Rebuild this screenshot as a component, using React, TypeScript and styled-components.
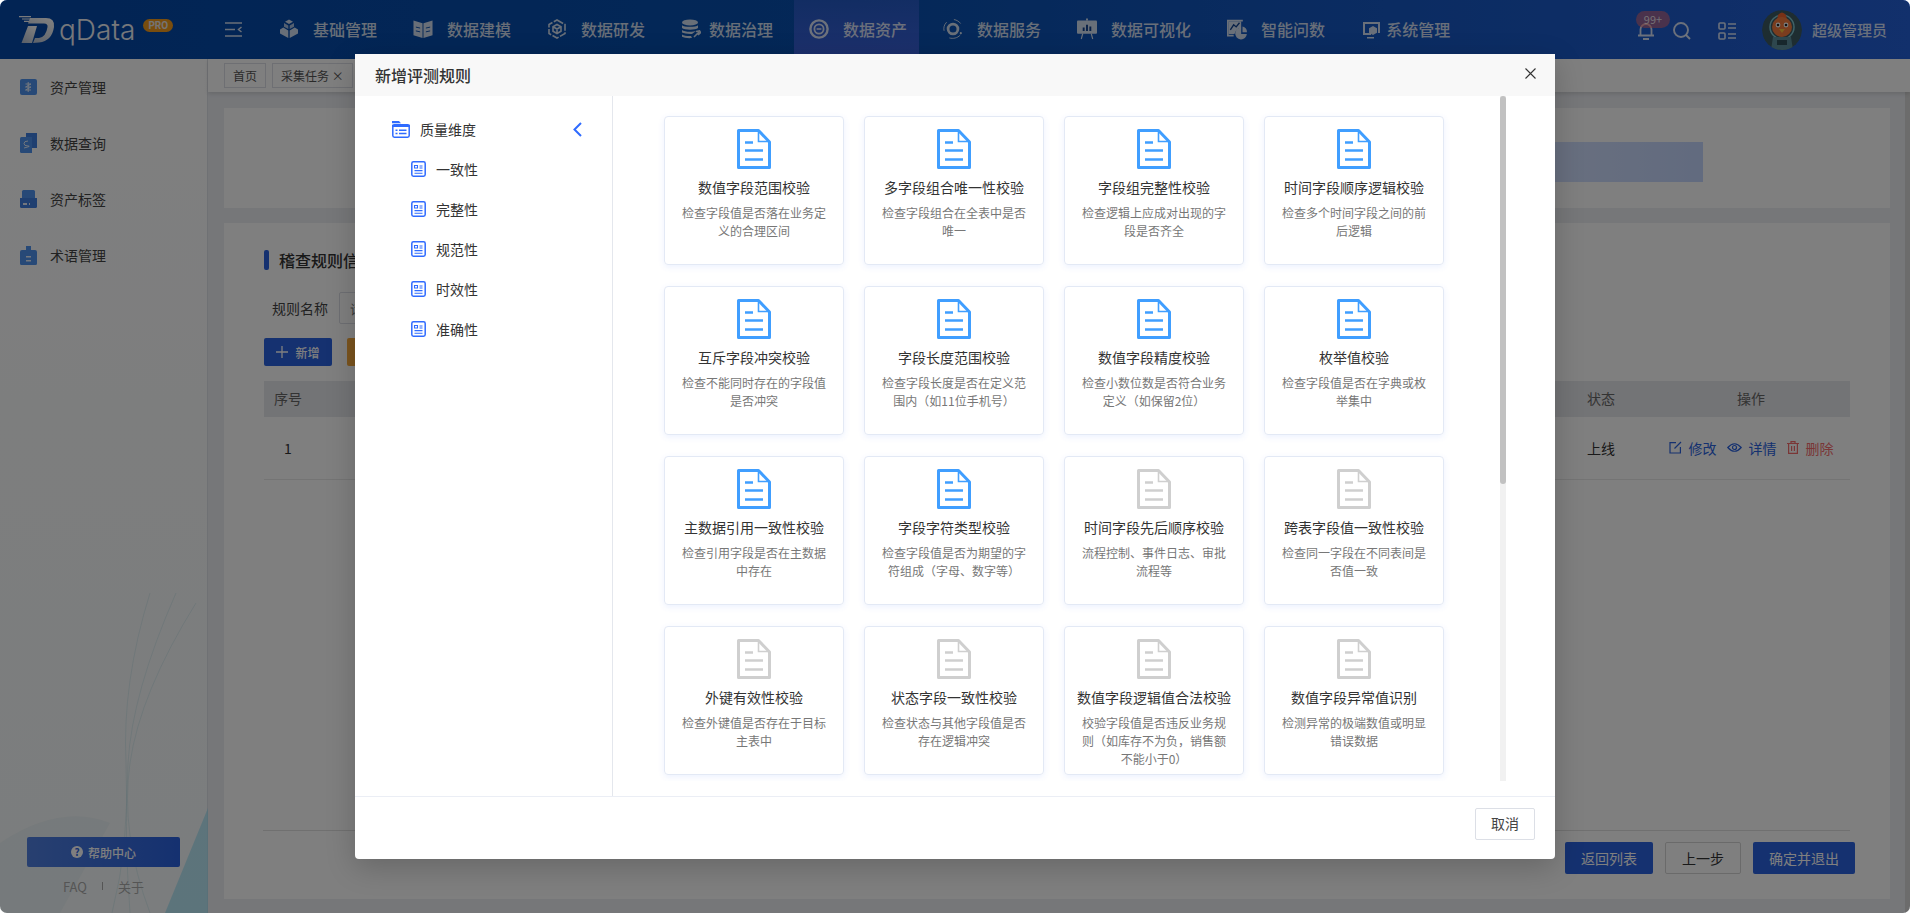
import React from 'react';
import styled, { createGlobalStyle } from 'styled-components';

const GlobalStyle = createGlobalStyle`
	html, body {
		margin: 0;
		height: 100%;
		background: #fff;
		overflow: hidden;
	}
	* {
		box-sizing: border-box;
	}
	body {
		font-family: 'Noto Sans CJK SC', 'Noto Sans', Roboto, sans-serif;
		color: #333;
	}
`;

const navItems = [
	{ label: '基础管理', icon: 'cube' },
	{ label: '数据建模', icon: 'book' },
	{ label: '数据研发', icon: 'hex' },
	{ label: '数据治理', icon: 'db', gap: 8 },
	{ label: '数据资产', icon: 'target', active: true },
	{ label: '数据服务', icon: 'orbit' },
	{ label: '数据可视化', icon: 'board' },
	{ label: '智能问数', icon: 'chart' },
	{ label: '系统管理', icon: 'screen', gap: 5 },
];

const sideItems = ['资产管理', '数据查询', '资产标签', '术语管理'];
const dimensions = ['一致性', '完整性', '规范性', '时效性', '准确性'];

const rules = [
	{ title: '数值字段范围校验', desc: '检查字段值是否落在业务定义的合理区间', on: true },
	{ title: '多字段组合唯一性校验', desc: '检查字段组合在全表中是否唯一', on: true },
	{ title: '字段组完整性校验', desc: '检查逻辑上应成对出现的字段是否齐全', on: true },
	{ title: '时间字段顺序逻辑校验', desc: '检查多个时间字段之间的前后逻辑', on: true },
	{ title: '互斥字段冲突校验', desc: '检查不能同时存在的字段值是否冲突', on: true },
	{ title: '字段长度范围校验', desc: '检查字段长度是否在定义范围内（如11位手机号）', on: true },
	{ title: '数值字段精度校验', desc: '检查小数位数是否符合业务定义（如保留2位）', on: true },
	{ title: '枚举值校验', desc: '检查字段值是否在字典或枚举集中', on: true },
	{ title: '主数据引用一致性校验', desc: '检查引用字段是否在主数据中存在', on: true },
	{ title: '字段字符类型校验', desc: '检查字段值是否为期望的字符组成（字母、数字等）', on: true },
	{ title: '时间字段先后顺序校验', desc: '流程控制、事件日志、审批流程等', on: false },
	{ title: '跨表字段值一致性校验', desc: '检查同一字段在不同表间是否值一致', on: false },
	{ title: '外键有效性校验', desc: '检查外键值是否存在于目标主表中', on: false },
	{ title: '状态字段一致性校验', desc: '检查状态与其他字段值是否存在逻辑冲突', on: false },
	{ title: '数值字段逻辑值合法校验', desc: '校验字段值是否违反业务规则（如库存不为负，销售额不能小于0）', on: false },
	{ title: '数值字段异常值识别', desc: '检测异常的极端数值或明显错误数据', on: false },
];

function NavGlyph({ name }: { name: string }) {
	const c = 'currentColor';
	switch (name) {
		case 'cube':
			return (
				<svg width='20' height='20' viewBox='0 0 20 20' fill={c}>
					<path d='M10 0.5 14 2.8 10 5 6 2.8Z' />
					<path d='M5 4 9.3 6.4V10L5 7.7ZM15 4 10.7 6.4V10L15 7.7Z' opacity='.8' />
					<path d='M4.3 8.6 9.3 11.4V19L1 14.6V10.4ZM15.7 8.6 10.7 11.4V19L19 14.6V10.4Z' />
				</svg>
			);
		case 'book':
			return (
				<svg width='21' height='20' viewBox='0 0 21 20' fill={c}>
					<path d='M0.5 1 10 4V19.5L0.5 16.5ZM20.5 1 11 4V19.5L20.5 16.5Z' />
					<path d='M3 8 7.5 9M3 12 7.5 13M18 8 13.5 9M18 12 13.5 13' stroke='#0a4fb0' strokeWidth='1' />
				</svg>
			);
		case 'hex':
			return (
				<svg width='20' height='20' viewBox='0 0 20 20' fill='none' stroke={c} strokeWidth='1.6'>
					<path d='M10 1 18 5.5V14.5L10 19 2 14.5V5.5Z' strokeDasharray='7 1.5' />
					<path d='M10 5.5 14 7.8V12.2L10 14.5 6 12.2V7.8ZM6 7.8 10 10 14 7.8M10 10V14.5' />
				</svg>
			);
		case 'db':
			return (
				<svg width='20' height='20' viewBox='0 0 20 20' fill={c}>
					<ellipse cx='9' cy='3.4' rx='8' ry='3' />
					<path d='M1 6.2C3 8.4 15 8.4 17 6.2V9C15 11.2 3 11.2 1 9Z' />
					<path d='M1 11C3 13.2 12 13.2 15 12L11 15C7 15.2 3 14.6 1 13.6Z' />
					<path d='M1 15.4C3 16.8 7 17.2 10 17L11 19C7 19.4 3 18.8 1 17.8Z' />
					<path d='M13 18 18 13M15 12.5 18.5 11.8 19.5 13.5 17 16' stroke={c} strokeWidth='1.6' fill='none' />
				</svg>
			);
		case 'target':
			return (
				<svg width='20' height='20' viewBox='0 0 20 20' fill='none' stroke={c}>
					<circle cx='10' cy='10' r='8.6' strokeWidth='2.4' />
					<circle cx='10' cy='10' r='4.6' strokeWidth='1.8' />
					<path d='M7.6 10H12.4' strokeWidth='1.6' />
				</svg>
			);
		case 'orbit':
			return (
				<svg width='22' height='24' viewBox='0 0 22 24' fill='none' stroke={c}>
					<circle cx='11' cy='12' r='5.4' strokeWidth='3' />
					<path d='M4 4.5C1 7.5 0.5 11 1.2 14M7 21.8C11 23 16 22 19 18.6M12 1.6C15 2 18 4 19.4 6' strokeWidth='1' />
					<circle cx='19.6' cy='16.6' r='1.2' fill={c} stroke='none' />
				</svg>
			);
		case 'board':
			return (
				<svg width='21' height='22' viewBox='0 0 21 22' fill={c}>
					<path d='M9.5 0H11.5V2H9.5Z' />
					<path d='M1 2H20Q21 2 21 3V15Q21 16 20 16H1Q0 16 0 15V3Q0 2 1 2Z' />
					<path d='M6 9.5H8V13H6ZM9.5 6.5H11.5V13H9.5ZM13 8.5H15V13H13Z' fill='#10408f' />
					<path d='M6 16 4.5 21.5M15 16 16.5 21.5' stroke={c} strokeWidth='1.2' fill='none' />
				</svg>
			);
		case 'chart':
			return (
				<svg width='24' height='26' viewBox='0 0 24 26' fill={c}>
					<path d='M0 2H19V4H17.6L2 4V20H8V22H0Z' />
					<path d='M2 4H17V12Q11 11.5 9 19H2Z' />
					<path d='M4 14 8 8 11 10.5 15 5.5' stroke='#10408f' strokeWidth='1.6' fill='none' />
					<path d='M17 11.5A7 7 0 1 0 23.8 19H17Z' />
					<path d='M18.6 10A7 7 0 0 1 24 16.8H18.6Z' />
				</svg>
			);
		default:
			return (
				<svg width='19' height='19' viewBox='0 0 19 19' fill={c}>
					<path d='M1 2H18V13H16V4H3V13H9V15H1Z' />
					<path d='M11 6 15 8.2V12.8L11 15 7 12.8V8.2Z' />
					<path d='M5 17H12V18.5H5Z' />
				</svg>
			);
	}
}

function SideGlyph({ index }: { index: number }) {
	const fill = '#4e92ee';
	const dark = '#3f7fe0';
	if (index === 1) {
		return (
			<svg width='17' height='20' viewBox='0 0 17 20'>
				<path d='M6 0H17V15H6Z' fill={dark} />
				<path d='M1.5 4H12V20H1.5Q0 20 0 18.5V5.5Q0 4 1.5 4Z' fill={fill} />
				<path d='M8 8Q4 8 4 10.5T8 13 4 15' stroke='#e6effc' fill='none' />
			</svg>
		);
	}
	if (index === 2) {
		return (
			<svg width='17' height='18' viewBox='0 0 17 18'>
				<path d='M3.5 0H13.5Q15 0 15 1.5V8H2V1.5Q2 0 3.5 0Z' fill={fill} />
				<path d='M0 8H17V16.5Q17 18 15.5 18H1.5Q0 18 0 16.5Z' fill={dark} />
				<path d='M3 13H7V15H3ZM9 13H10V15H9Z' fill='#e6effc' />
			</svg>
		);
	}
	if (index === 3) {
		return (
			<svg width='17' height='19' viewBox='0 0 17 19'>
				<path d='M6 0H11V4H15Q17 4 17 6V17.5Q17 19 15.5 19H1.5Q0 19 0 17.5V6Q0 4 2 4H6Z' fill={fill} />
				<path d='M6 10H11V11.5H6ZM6 14H11V15.5H6Z' fill='#e6effc' />
			</svg>
		);
	}
	return (
		<svg width='17' height='16' viewBox='0 0 17 16'>
			<rect width='17' height='16' rx='2' fill={fill} />
			<path d='M5.5 5H11M5.5 11H11M11 5 5.5 8H11L5.5 11M8.2 3V13' stroke='#e6effc' fill='none' />
		</svg>
	);
}

function DocIcon({ color }: { color: string }) {
	return (
		<svg width='34' height='40' viewBox='0 0 34 40' fill='none'>
			<path d='M1.5 1.5H21.5L32.5 13V38.5H1.5Z' stroke={color} strokeWidth='3' strokeLinejoin='round' />
			<path d='M21.5 2V12.5H32' stroke={color} strokeWidth='1.6' />
			<path d='M8 13.5H16M8 21.5H26M8 30.5H26' stroke={color} strokeWidth='2.4' />
		</svg>
	);
}

function Dimension() {
	return (
		<svg width='15' height='16' viewBox='0 0 15 16' fill='none' stroke='#2f6bff'>
			<rect x='0.8' y='0.8' width='13.4' height='14.4' rx='1.6' strokeWidth='1.5' />
			<path d='M3.5 4.5H6.5V7H3.5ZM8.5 5H11.5M8.5 7H11.5M3.5 9.6H11.5M3.5 12.2H11.5' strokeWidth='1.1' />
		</svg>
	);
}

function App() {
	return (
		<Page>
			<GlobalStyle />
			<Header>
				<Logo>
					<svg width='36' height='28' viewBox='0 0 36 28'>
						<defs>
							<linearGradient id='logoFill' x1='0.8' y1='0' x2='0.1' y2='1'>
								<stop offset='0' stopColor='#ffffff' />
								<stop offset='1' stopColor='#b4c0d2' />
							</linearGradient>
						</defs>
						<path d='M11 2H27Q36 2 35 11 33 25 20 26.5L14 27 16 22H20Q27 21 28.5 11 29 7.5 25 7.5H9Z' fill='url(#logoFill)' />
						<path d='M9 10H18L13 27H2.5Z' fill='url(#logoFill)' />
						<path d='M0 0.6H12M3 3H13M5 5.4H10' stroke='#f2f4f8' strokeWidth='1.2' />
					</svg>
					<LogoText>qData</LogoText>
					<ProBadge>PRO</ProBadge>
				</Logo>
				<Toggle>
					<svg width='17' height='15' viewBox='0 0 17 15' stroke='currentColor' strokeWidth='1.5' fill='none'>
						<path d='M0 1H17M0 7.5H10M0 14H17M16.5 5 13.5 7.5 16.5 10' />
					</svg>
				</Toggle>
				<Nav>
					{navItems.map((item) => (
						<NavItem key={item.label} $active={item.active} $gap={item.gap}>
							<NavIconBox>
								<NavGlyph name={item.icon} />
							</NavIconBox>
							{item.label}
						</NavItem>
					))}
				</Nav>
				<HeaderRight>
					<Bell>
						<svg width='18' height='18' viewBox='0 0 18 18' fill='none' stroke='currentColor' strokeWidth='1.8'>
							<path d='M3.5 13V7.5A5.5 5.5 0 0 1 14.5 7.5V13M1 13.5H17M6 17H12' />
						</svg>
						<Badge>99+</Badge>
					</Bell>
					<HeaderIcon>
						<svg width='18' height='18' viewBox='0 0 18 18' fill='none' stroke='currentColor' strokeWidth='1.9'>
							<circle cx='8' cy='8' r='7' />
							<path d='M13 13 17 17' />
						</svg>
					</HeaderIcon>
					<ListIcon>
						<svg width='18' height='18' viewBox='0 0 18 18' fill='none' stroke='currentColor' strokeWidth='1.6'>
							<rect x='1' y='1' width='6' height='6' rx='1' />
							<rect x='1' y='11' width='6' height='6' rx='1' />
							<path d='M10 2H18M10 6H18M10 12H18M10 16H18' />
						</svg>
					</ListIcon>
					<Avatar>
						<svg width='40' height='40' viewBox='0 0 40 40'>
							<circle cx='20' cy='20' r='20' fill='#3d5a63' />
							<circle cx='20' cy='17' r='12' fill='none' stroke='#7fc6d0' strokeWidth='1.5' />
							<path d='M16 5Q20 0 24 5L25 10H15Z' fill='#f0622c' />
							<circle cx='20' cy='17' r='10' fill='#f47a3c' />
							<circle cx='16' cy='15' r='2.4' fill='#fff' />
							<circle cx='24' cy='15' r='2.4' fill='#fff' />
							<circle cx='16' cy='15' r='1.3' fill='#222' />
							<circle cx='24' cy='15' r='1.3' fill='#222' />
							<path d='M17 19H23L20 23Z' fill='#f9c23c' />
							<path d='M11 27H29L31 40H9Z' fill='#5d8f9c' />
							<rect x='15' y='30' width='10' height='5' fill='#2f4f58' />
						</svg>
					</Avatar>
					<UserName>超级管理员</UserName>
				</HeaderRight>
			</Header>

			<Body>
				<Sidebar>
					<Waves viewBox='0 0 208 320'>
						<path d='M208 215 165 320H208Z' fill='#9fe0f5' opacity='.7' />
						<path d='M0 250Q60 210 110 230L60 320H0Z' fill='#cfe4ea' opacity='.25' />
						<path d='M150 0Q122 90 126 170T112 320M176 0Q132 100 128 170T130 320M196 10Q140 100 130 170T150 320' stroke='#a8d4de' fill='none' opacity='.3' />
					</Waves>
					{sideItems.map((label, i) => (
						<SideItem key={label}>
							<SideIconBox>
								<SideGlyph index={i} />
							</SideIconBox>
							{label}
						</SideItem>
					))}
					<SideBottom>
						<HelpButton>
							<HelpDot>?</HelpDot>
							帮助中心
						</HelpButton>
						<SideLinks>
							<span>FAQ</span>
							<LinkBar />
							<span>关于</span>
						</SideLinks>
					</SideBottom>
				</Sidebar>

				<Main>
					<TagBar>
						<Tag>首页</Tag>
						<Tag>采集任务 ×</Tag>
					</TagBar>
					<Content>
						<StepCard>
							<StepBar />
						</StepCard>
						<RuleCard>
							<SectionTitle>稽查规则信息</SectionTitle>
							<FilterRow>
								<FilterLabel>规则名称</FilterLabel>
								<FilterInput placeholder='请输入规则名称' />
							</FilterRow>
							<Toolbar>
								<AddButton>
									<svg width='12' height='12' viewBox='0 0 12 12' stroke='currentColor' strokeWidth='1.3'>
										<path d='M6 0V12M0 6H12' />
									</svg>
									新增
								</AddButton>
								<OrangeButton>导入</OrangeButton>
							</Toolbar>
							<TableHead>
								<Centered>序号</Centered>
								<span />
								<span>状态</span>
								<Centered>操作</Centered>
							</TableHead>
							<TableRow>
								<Centered>1</Centered>
								<span />
								<span>上线</span>
								<Actions>
									<Action>
										<svg width='13' height='13' viewBox='0 0 13 13' fill='none' stroke='currentColor' strokeWidth='1.2'>
											<path d='M7 1.6H1V12H11.4V6M5.5 7.5 12 1' />
										</svg>
										修改
									</Action>
									<Action>
										<svg width='15' height='11' viewBox='0 0 15 11' fill='none' stroke='currentColor' strokeWidth='1.2'>
											<path d='M0.8 5.5Q7.5 -2 14.2 5.5 7.5 13 0.8 5.5Z' />
											<circle cx='7.5' cy='5.5' r='2' />
										</svg>
										详情
									</Action>
									<Action $danger>
										<svg width='12' height='13' viewBox='0 0 12 13' fill='none' stroke='currentColor' strokeWidth='1.2'>
											<path d='M0 2.5H12M4 2.5V0.7H8V2.5M1.6 2.5V12.4H10.4V2.5M4.6 5V10M7.4 5V10' />
										</svg>
										删除
									</Action>
								</Actions>
							</TableRow>
							<CardFooter>
								<FooterRule />
								<FooterButtons>
									<PrimaryButton>返回列表</PrimaryButton>
									<PlainButton>上一步</PlainButton>
									<PrimaryButton>确定并退出</PrimaryButton>
								</FooterButtons>
							</CardFooter>
						</RuleCard>
					</Content>
					<PageScroll />
				</Main>
			</Body>

			<Overlay>
				<Modal>
					<ModalHeader>
						新增评测规则
						<svg width='11' height='11' viewBox='0 0 11 11' stroke='#333' strokeWidth='1.1'>
							<path d='M0.5 0.5 10.5 10.5M10.5 0.5 0.5 10.5' />
						</svg>
					</ModalHeader>
					<ModalBody>
						<Tree>
							<TreeRoot>
								<svg width='18' height='17' viewBox='0 0 18 17' fill='none'>
									<path d='M0 0H7L9 2.2H0Z' fill='#2f6bff' />
									<rect x='0.8' y='3.8' width='16.4' height='12.4' rx='1.6' stroke='#2f6bff' strokeWidth='1.5' />
									<path d='M0 3.8H18V6H0Z' fill='#2f6bff' />
									<path d='M3.5 8.5H5.5V10H3.5ZM3.5 11.8H5.5V13.3H3.5ZM7 8.5H14.5V10H7ZM7 11.8H14.5V13.3H7Z' fill='#2f6bff' />
								</svg>
								<TreeRootLabel>质量维度</TreeRootLabel>
								<svg width='9' height='15' viewBox='0 0 9 15' fill='none' stroke='#2f6bff' strokeWidth='2'>
									<path d='M8 1 1.5 7.5 8 14' />
								</svg>
							</TreeRoot>
							{dimensions.map((d) => (
								<TreeItem key={d}>
									<Dimension />
									{d}
								</TreeItem>
							))}
						</Tree>
						<RuleScroll>
							<RuleGrid>
								{rules.map((r) => (
									<Rule key={r.title}>
										<DocIcon color={r.on ? '#409eff' : '#cfcfcf'} />
										<RuleTitle>{r.title}</RuleTitle>
										<RuleDesc>{r.desc}</RuleDesc>
									</Rule>
								))}
							</RuleGrid>
						</RuleScroll>
						<ScrollTrack>
							<ScrollThumb />
						</ScrollTrack>
					</ModalBody>
					<ModalFooter>
						<CancelButton>取消</CancelButton>
					</ModalFooter>
				</Modal>
			</Overlay>
		</Page>
	);
}

const Page = styled('div')`
	width: 1910px;
	height: 913px;
	display: flex;
	flex-direction: column;
	border-radius: 7px;
	overflow: hidden;
	position: relative;
`;

const Header = styled('header')`
	height: 59px;
	flex: none;
	display: flex;
	align-items: center;
	color: rgba(255, 255, 255, 0.82);
	background: linear-gradient(90deg, #0448a8 0%, #0850b0 45%, #2460d8 100%);
`;

const Logo = styled('div')`
	width: 225px;
	flex: none;
	padding-left: 19px;
	display: flex;
	align-items: center;
`;

const LogoText = styled('span')`
	font-family: Inter, Roboto, sans-serif;
	font-size: 28px;
	font-weight: 300;
	margin-left: 4px;
	color: #eef1f6;
	line-height: 1;
`;

const ProBadge = styled('span')`
	margin: 0 0 8px 8px;
	width: 30px;
	height: 13px;
	line-height: 13px;
	border-radius: 7px;
	background: #f39a1c;
	color: #e8e8e8;
	font-family: Roboto, sans-serif;
	font-size: 10px;
	font-weight: 700;
	text-align: center;
`;

const Toggle = styled('div')`
	width: 17px;
	margin-right: 22px;
	display: flex;
	flex: none;
`;

const Nav = styled('nav')`
	display: flex;
	gap: 9px;
	height: 100%;
`;

const NavItem = styled('div')<{ $active?: boolean; $gap?: number }>`
	height: 100%;
	padding: 0 12px 1px 15px;
	display: flex;
	align-items: center;
	gap: ${(p) => p.$gap ?? 14}px;
	font-size: 16px;
	font-weight: 500;
	white-space: nowrap;
	background: ${(p) =>
		p.$active ? 'linear-gradient(180deg, rgba(90,110,240,.35), rgba(100,110,255,.55))' : 'none'};
`;

const NavIconBox = styled('span')`
	width: 20px;
	flex: none;
	display: flex;
	justify-content: center;
`;

const HeaderRight = styled('div')`
	margin-left: auto;
	padding-right: 23px;
	display: flex;
	align-items: center;
`;

const Bell = styled('div')`
	width: 18px;
	height: 18px;
	position: relative;
	margin-right: 18px;
`;

const Badge = styled('span')`
	position: absolute;
	left: -1px;
	top: -10px;
	width: 34px;
	height: 17px;
	line-height: 17px;
	border-radius: 9px;
	background: rgba(245, 108, 108, 0.55);
	font-size: 11px;
	text-align: center;
`;

const HeaderIcon = styled('div')`
	height: 18px;
	margin-right: 27px;
`;

const ListIcon = styled(HeaderIcon)`
	margin-right: 26px;
`;

const Avatar = styled('div')`
	width: 40px;
	height: 40px;
	border-radius: 50%;
	overflow: hidden;
	margin-right: 10px;
`;

const UserName = styled('span')`
	font-size: 15px;
	font-weight: 500;
`;

const Body = styled('div')`
	flex: 1;
	display: flex;
	min-height: 0;
`;

const Sidebar = styled('aside')`
	width: 208px;
	flex: none;
	display: flex;
	flex-direction: column;
	position: relative;
	background: linear-gradient(180deg, #fff 0%, #fbfcfd 40%, #f6fbfc 100%);
	border-right: 1px solid #dfe2e8;
`;

const Waves = styled('svg')`
	position: absolute;
	left: 0;
	bottom: 0;
	width: 208px;
	height: 320px;
`;

const SideItem = styled('div')`
	height: 56px;
	padding-left: 20px;
	display: flex;
	align-items: center;
	gap: 13px;
	font-size: 14px;
	color: #444;
`;

const SideIconBox = styled('span')`
	width: 17px;
	display: flex;
`;

const SideBottom = styled('div')`
	margin-top: auto;
	padding: 0 27px 17px;
	position: relative;
`;

const HelpButton = styled('div')`
	height: 30px;
	border-radius: 2px;
	display: flex;
	align-items: center;
	justify-content: center;
	gap: 5px;
	font-size: 12px;
	font-weight: 500;
	color: #fff;
	background: linear-gradient(90deg, #5080e0, #2a62e0);
`;

const HelpDot = styled('span')`
	width: 12px;
	height: 12px;
	border-radius: 50%;
	background: #fff;
	color: #2a62e0;
	font-size: 10px;
	line-height: 12px;
	text-align: center;
	font-weight: 700;
`;

const SideLinks = styled('div')`
	margin-top: 9px;
	height: 20px;
	display: flex;
	align-items: center;
	justify-content: center;
	gap: 15px;
	font-size: 13px;
	color: #aaa;
`;

const LinkBar = styled('i')`
	width: 1px;
	height: 8px;
	background: #aaa;
`;

const Main = styled('main')`
	flex: 1;
	min-width: 0;
	display: flex;
	flex-wrap: wrap;
	align-content: flex-start;
	background: #eceef3;
	position: relative;
`;

const TagBar = styled('div')`
	width: 100%;
	height: 33px;
	padding: 4px 16px 0;
	display: flex;
	gap: 6px;
	background: #fff;
	box-shadow: 0 2px 4px rgba(0, 0, 0, 0.12);
	position: relative;
`;

const Tag = styled('span')`
	height: 25px;
	padding: 0 8px;
	line-height: 23px;
	border: 1px solid #dcdfe6;
	font-size: 12px;
	color: #555;
	white-space: nowrap;
`;

const Content = styled('div')`
	flex: 1;
	padding: 16px 15px 14px 16px;
	display: flex;
	flex-direction: column;
	gap: 15px;
	height: 821px;
`;

const PageScroll = styled('div')`
	width: 5px;
	height: 821px;
	background: #d8d8d8;
`;

const StepCard = styled('section')`
	height: 100px;
	background: #fff;
	padding-top: 34px;
`;

const StepBar = styled('div')`
	height: 40px;
	width: 1448px;
	margin-left: 31px;
	background: linear-gradient(90deg, #fff 55%, #c4d6ff 100%);
`;

const RuleCard = styled('section')`
	flex: 1;
	background: #fff;
	padding: 27px 40px 25px;
	display: flex;
	flex-direction: column;
`;

const SectionTitle = styled('h3')`
	margin: 0;
	height: 20px;
	line-height: 20px;
	font-size: 16px;
	font-weight: 500;
	padding-left: 15px;
	position: relative;
	white-space: nowrap;
	&::before {
		content: '';
		position: absolute;
		left: 0;
		top: 0;
		width: 5px;
		height: 20px;
		border-radius: 2px;
		background: #2a62e0;
	}
`;

const FilterRow = styled('div')`
	margin-top: 22px;
	display: flex;
	align-items: center;
	padding-left: 8px;
	gap: 11px;
`;

const FilterLabel = styled('label')`
	font-size: 14px;
	color: #444;
`;

const FilterInput = styled('input')`
	width: 220px;
	height: 32px;
	padding: 0 10px;
	border: 1px solid #dcdfe6;
	border-radius: 2px;
	font: inherit;
	font-size: 13px;
`;

const Toolbar = styled('div')`
	margin-top: 14px;
	display: flex;
	gap: 15px;
`;

const AddButton = styled('div')`
	width: 68px;
	height: 28px;
	border-radius: 2px;
	display: flex;
	align-items: center;
	justify-content: center;
	gap: 7px;
	font-size: 12px;
	font-weight: 500;
	color: #fff;
	background: #2a62e0;
`;

const OrangeButton = styled(AddButton)`
	background: #f7a83c;
`;

const TableHead = styled('div')`
	margin-top: 15px;
	height: 36px;
	padding-bottom: 2px;
	display: grid;
	grid-template-columns: 48px 1fr 65px 198px;
	align-items: center;
	background: #e6e8ec;
	font-size: 14px;
	color: #666;
`;

const TableRow = styled(TableHead)`
	margin-top: 0;
	height: 63px;
	padding-bottom: 1px;
	background: none;
	border-bottom: 1px solid #e8e8e8;
	color: #333;
`;

const Centered = styled('span')`
	text-align: center;
`;

const Actions = styled('div')`
	display: flex;
	justify-content: center;
	gap: 10px;
`;

const Action = styled('span')<{ $danger?: boolean }>`
	display: flex;
	align-items: center;
	gap: 7px;
	font-size: 14px;
	color: ${(p) => (p.$danger ? '#f56c6c' : '#2a62e0')};
`;

const CardFooter = styled('div')`
	margin-top: auto;
`;

const FooterRule = styled('div')`
	height: 1px;
	background: #e0e0e0;
	margin-left: -1px;
`;

const FooterButtons = styled('div')`
	margin: 11px -5px 0 0;
	display: flex;
	justify-content: flex-end;
	gap: 12px;
`;

const PrimaryButton = styled('div')`
	height: 32px;
	padding: 0 16px;
	border-radius: 2px;
	line-height: 32px;
	font-size: 14px;
	color: #fff;
	background: #2a62e0;
`;

const PlainButton = styled(PrimaryButton)`
	line-height: 30px;
	border: 1px solid #d5d5d5;
	color: #333;
	background: #fff;
`;

const Overlay = styled('div')`
	position: absolute;
	inset: 0;
	background: rgba(0, 0, 0, 0.5);
	padding-top: 54px;
`;

const Modal = styled('div')`
	width: 1200px;
	height: 805px;
	margin: 0 auto;
	display: flex;
	flex-direction: column;
	background: #fff;
	border-radius: 0 0 4px 4px;
	box-shadow: 0 8px 30px rgba(0, 0, 0, 0.2);
`;

const ModalHeader = styled('div')`
	height: 42px;
	flex: none;
	padding: 0 19px 0 20px;
	display: flex;
	align-items: center;
	justify-content: space-between;
	font-size: 16px;
	font-weight: 500;
	color: #333;
	background: #f8f8f8;
	svg {
		margin-top: -4px;
	}
`;

const ModalBody = styled('div')`
	flex: 1;
	display: flex;
	min-height: 0;
`;

const Tree = styled('div')`
	width: 258px;
	flex: none;
	padding: 13px 0 0 37px;
	border-right: 1px solid #e4e7ed;
`;

const TreeRoot = styled('div')`
	height: 40px;
	width: 190px;
	display: flex;
	align-items: center;
	font-size: 14px;
	color: #333;
`;

const TreeRootLabel = styled('span')`
	margin-left: 10px;
	flex: 1;
`;

const TreeItem = styled('div')`
	height: 40px;
	padding-left: 19px;
	display: flex;
	align-items: center;
	gap: 10px;
	font-size: 14px;
	color: #333;
`;

const RuleScroll = styled('div')`
	width: 887px;
	height: 685px;
	flex: none;
	padding: 20px 0 0 51px;
	overflow: hidden;
`;

const RuleGrid = styled('div')`
	display: grid;
	grid-template-columns: repeat(4, 180px);
	grid-auto-rows: 149px;
	column-gap: 20px;
	row-gap: 21px;
`;

const ScrollTrack = styled('div')`
	width: 6px;
	height: 685px;
	flex: none;
	background: #f1f1f1;
`;

const ScrollThumb = styled('div')`
	height: 388px;
	border-radius: 3px;
	background: #c1c1c1;
`;

const Rule = styled('div')`
	border: 1px solid #e3e9f5;
	border-radius: 4px;
	padding: 12px 12px 0;
	display: flex;
	flex-direction: column;
	align-items: center;
	box-shadow: 0 2px 6px rgba(64, 120, 255, 0.1);
	text-align: center;
`;

const RuleTitle = styled('div')`
	margin-top: 8px;
	line-height: 20px;
	font-size: 14px;
	color: #333;
	white-space: nowrap;
`;

const RuleDesc = styled('div')`
	margin-top: 7px;
	line-height: 18px;
	font-size: 12px;
	color: #777;
`;

const ModalFooter = styled('div')`
	height: 63px;
	flex: none;
	padding: 11px 20px 0;
	display: flex;
	justify-content: flex-end;
	border-top: 1px solid #ebeef5;
`;

const CancelButton = styled('div')`
	width: 60px;
	height: 32px;
	line-height: 28px;
	text-align: center;
	font-size: 14px;
	color: #444;
	border: 1px solid #dcdfe6;
	border-radius: 2px;
`;

export default App;
